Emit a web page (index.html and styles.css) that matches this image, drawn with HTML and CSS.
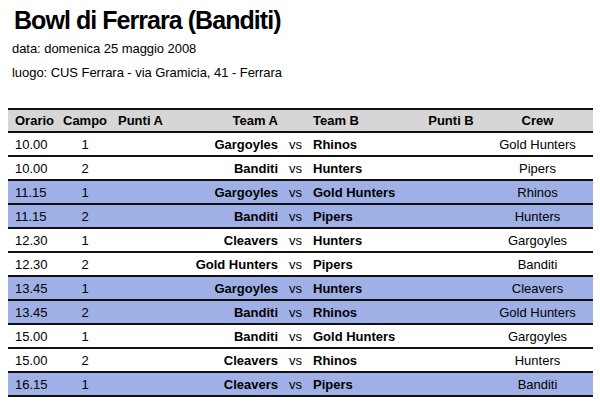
FILE: index.html
```html
<!DOCTYPE html>
<html lang="it">
<head>
<meta charset="utf-8">
<title>Bowl di Ferrara (Banditi)</title>
<link rel="stylesheet" href="styles.css">
</head>
<body>
<header class="info">
  <h1 class="title">Bowl di Ferrara (Banditi)</h1>
  <p class="meta">data: domenica 25 maggio 2008</p>
  <p class="meta">luogo: CUS Ferrara - via Gramicia, 41 - Ferrara</p>
</header>
<table class="games">
  <colgroup>
    <col class="c-orario"><col class="c-campo"><col class="c-pa"><col class="c-ta"><col class="c-vs"><col class="c-tb"><col class="c-pb"><col class="c-crew">
  </colgroup>
  <thead>
    <tr>
      <th class="left">Orario</th><th class="center">Campo</th><th class="left pa">Punti A</th><th class="right">Team A</th><th></th><th class="left">Team B</th><th class="center">Punti B</th><th class="center">Crew</th>
    </tr>
  </thead>
  <tbody>
    <tr><td>10.00</td><td class="center">1</td><td></td><td class="team right">Gargoyles</td><td class="vs">vs</td><td class="team">Rhinos</td><td></td><td class="center">Gold Hunters</td></tr>
    <tr><td>10.00</td><td class="center">2</td><td></td><td class="team right">Banditi</td><td class="vs">vs</td><td class="team">Hunters</td><td></td><td class="center">Pipers</td></tr>
    <tr class="hl"><td>11.15</td><td class="center">1</td><td></td><td class="team right">Gargoyles</td><td class="vs">vs</td><td class="team">Gold Hunters</td><td></td><td class="center">Rhinos</td></tr>
    <tr class="hl"><td>11.15</td><td class="center">2</td><td></td><td class="team right">Banditi</td><td class="vs">vs</td><td class="team">Pipers</td><td></td><td class="center">Hunters</td></tr>
    <tr><td>12.30</td><td class="center">1</td><td></td><td class="team right">Cleavers</td><td class="vs">vs</td><td class="team">Hunters</td><td></td><td class="center">Gargoyles</td></tr>
    <tr><td>12.30</td><td class="center">2</td><td></td><td class="team right">Gold Hunters</td><td class="vs">vs</td><td class="team">Pipers</td><td></td><td class="center">Banditi</td></tr>
    <tr class="hl"><td>13.45</td><td class="center">1</td><td></td><td class="team right">Gargoyles</td><td class="vs">vs</td><td class="team">Hunters</td><td></td><td class="center">Cleavers</td></tr>
    <tr class="hl"><td>13.45</td><td class="center">2</td><td></td><td class="team right">Banditi</td><td class="vs">vs</td><td class="team">Rhinos</td><td></td><td class="center">Gold Hunters</td></tr>
    <tr><td>15.00</td><td class="center">1</td><td></td><td class="team right">Banditi</td><td class="vs">vs</td><td class="team">Gold Hunters</td><td></td><td class="center">Gargoyles</td></tr>
    <tr><td>15.00</td><td class="center">2</td><td></td><td class="team right">Cleavers</td><td class="vs">vs</td><td class="team">Rhinos</td><td></td><td class="center">Hunters</td></tr>
    <tr class="hl"><td>16.15</td><td class="center">1</td><td></td><td class="team right">Cleavers</td><td class="vs">vs</td><td class="team">Pipers</td><td></td><td class="center">Banditi</td></tr>
  </tbody>
</table>
</body>
</html>
```
FILE: styles.css
```css
html, body {
  background: #ffffff;
}
body {
  margin: 0;
  padding: 0 7px 0 8px;
  font-family: "Liberation Sans", Arial, sans-serif;
  color: #000;
}
.info {
  padding-left: 4px;
}
.title {
  margin: 0;
  padding-top: 5px;
  padding-left: 2px;
  font-size: 25px;
  line-height: 30px;
  font-weight: bold;
  letter-spacing: -0.95px;
}
.meta {
  margin: 0;
  font-size: 13px;
  line-height: 24px;
  letter-spacing: -0.05px;
}
.meta:first-of-type {
  margin-top: 2px;
}
.games {
  margin-top: 23px;
  width: 585px;
  border-collapse: collapse;
  table-layout: fixed;
  font-size: 13px;
  border-top: 2px solid #111;
}
.c-orario { width: 50px; }
.c-campo { width: 54px; }
.c-pa { width: 73px; }
.c-ta { width: 98px; }
.c-vs { width: 25px; }
.c-tb { width: 112px; }
.c-pb { width: 62px; }
.c-crew { width: 111px; }
.games thead tr {
  background: #d6d6d6;
}
.games th {
  height: 21px;
  padding: 0 5px;
  font-weight: bold;
  border-bottom: 2px solid #111;
  white-space: nowrap;
}
.games td {
  height: 22px;
  padding: 0 5px;
  border-bottom: 2px solid #111;
  white-space: nowrap;
}
.games th:first-child, .games td:first-child {
  padding-left: 7px;
}
.games th.pa {
  padding-left: 6px;
}
.left { text-align: left; }
.right { text-align: right; }
.center { text-align: center; }
.team { font-weight: bold; }
.vs { text-align: center; padding: 0; }
.games tr.hl {
  background: #9fb0e6;
}
```
